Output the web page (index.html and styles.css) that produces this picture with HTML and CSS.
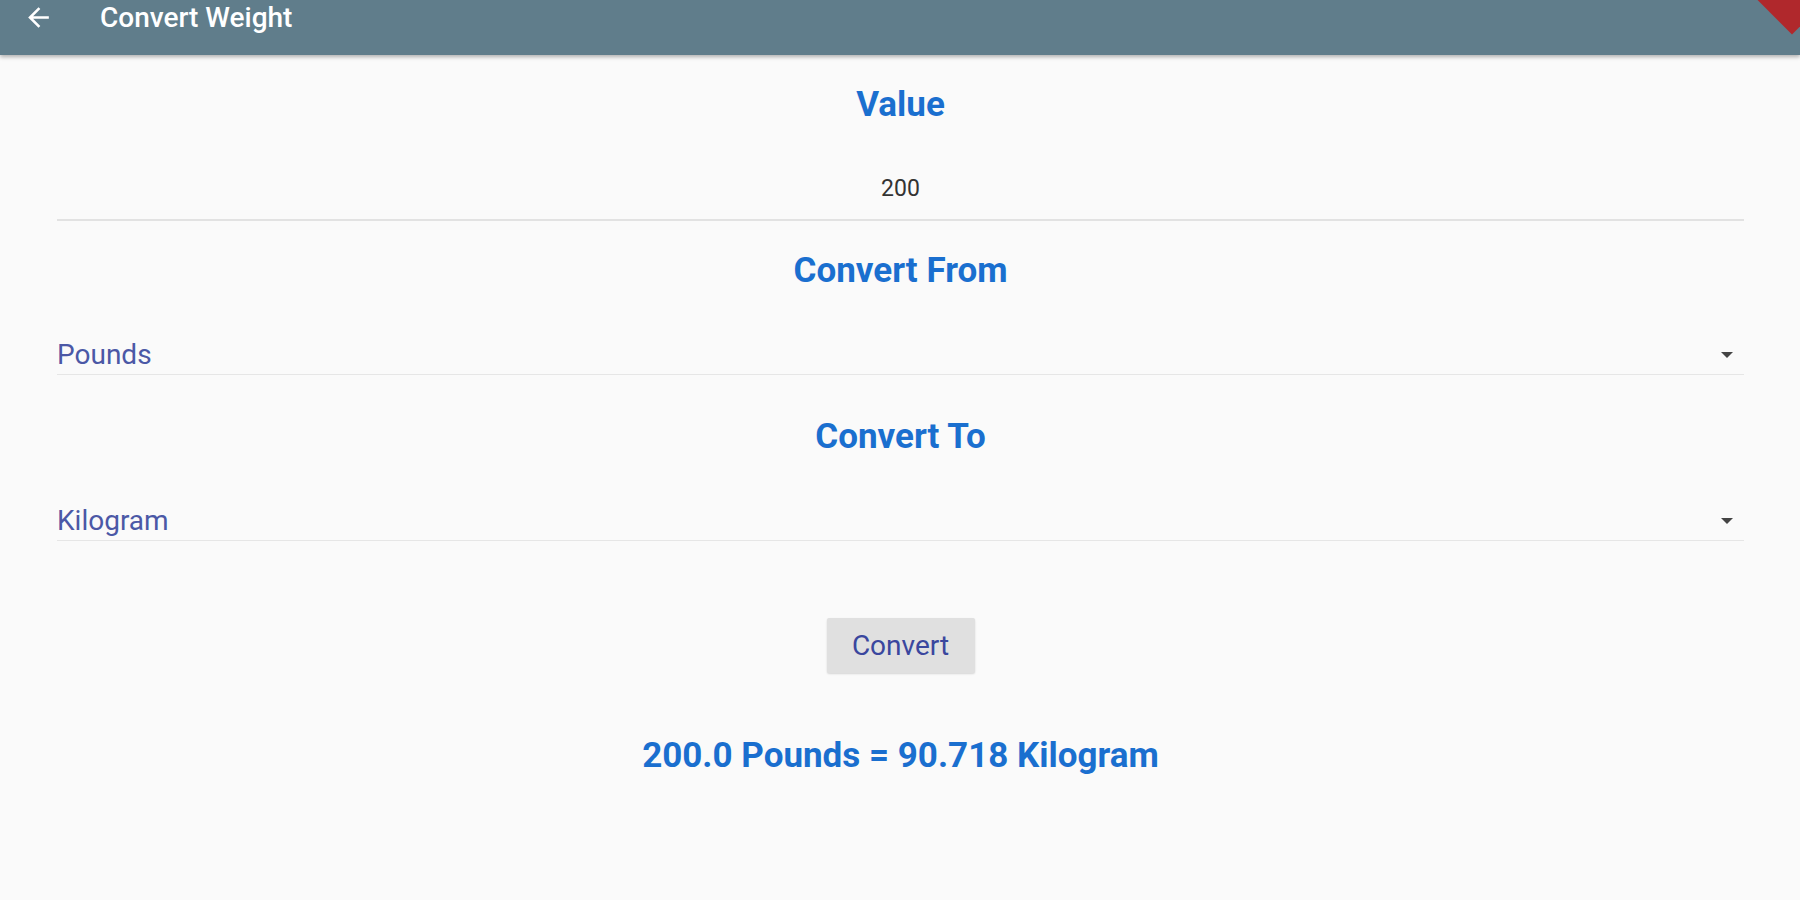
FILE: index.html
```html
<!DOCTYPE html>
<html lang="en">
<head>
  <meta charset="UTF-8">
  <meta name="viewport" content="width=device-width, initial-scale=1.0">
  <title>Convert Weight</title>
  <link rel="stylesheet" href="styles.css">
</head>
<body>
  <header class="app-bar">
    <span class="back">
      <svg viewBox="0 0 24 24"><path d="M20 11H7.83l5.59-5.59L12 4l-8 8 8 8 1.41-1.41L7.83 13H20v-2z" fill="#fff"/></svg>
    </span>
    <span class="title">Convert Weight</span>
    <span class="debug-banner"></span>
  </header>

  <main class="form">
    <h2 class="section-title first">Value</h2>
    <div class="value-field">200</div>

    <h2 class="section-title">Convert From</h2>
    <div class="dropdown">
      <span>Pounds</span>
      <span class="caret"></span>
    </div>

    <h2 class="section-title">Convert To</h2>
    <div class="dropdown">
      <span>Kilogram</span>
      <span class="caret"></span>
    </div>

    <div class="actions">
      <button class="convert-btn">Convert</button>
    </div>

    <p class="result">200.0 Pounds = 90.718 Kilogram</p>
  </main>
</body>
</html>
```

FILE: styles.css
```css
body {
  margin: 0;
  background-color: #fafafa;
  font-family: Roboto, "Liberation Sans", sans-serif;
  overflow: hidden;
}
.app-bar {
  position: relative;
  height: 55px;
  background-color: #607d8b;
  display: flex;
  align-items: flex-start;
  box-shadow: 0 2px 4px rgba(0, 0, 0, 0.3);
  overflow: hidden;
}
.back {
  margin: 2px 0 0 23px;
  width: 31px;
  height: 31px;
}
.back svg {
  width: 31px;
  height: 31px;
}
.title {
  margin: 0 0 0 46px;
  color: #fff;
  font-size: 28px;
  font-weight: 500;
  line-height: 36px;
}
.debug-banner {
  position: absolute;
  right: -22px;
  top: -38px;
  width: 60px;
  height: 60px;
  background-color: #b0282c;
  transform: rotate(45deg);
}
.form {
  padding: 0 56px 0 57px;
  display: flex;
  flex-direction: column;
}
.section-title {
  margin: 0;
  text-align: center;
  color: #1a6fcf;
  font-size: 35px;
  font-weight: 700;
  line-height: 40px;
}
.section-title.first {
  margin-top: 30px;
}
.value-field {
  text-align: center;
  color: #333;
  font-size: 23px;
  line-height: 30px;
  padding: 49px 0 15px;
  border-bottom: 2px solid #e2e2e2;
}
.value-field + .section-title {
  margin-top: 30px;
}
.dropdown {
  margin-top: 48px;
  margin-bottom: 42px;
  display: flex;
  justify-content: space-between;
  align-items: center;
  color: #4b58a6;
  font-size: 28px;
  line-height: 32px;
  padding-bottom: 3px;
  border-bottom: 1px solid #e6e6e6;
}
.caret {
  width: 0;
  height: 0;
  border-left: 6px solid transparent;
  border-right: 6px solid transparent;
  border-top: 6px solid #444;
  margin-right: 11px;
}
.actions {
  display: flex;
  justify-content: center;
  margin-top: 35px;
}
.convert-btn {
  width: 148px;
  height: 55px;
  font-family: inherit;
  font-size: 28px;
  color: #3a479e;
  background-color: #e0e0e0;
  border: none;
  border-radius: 2px;
  box-shadow: 0 1px 2px rgba(0, 0, 0, 0.15);
  cursor: pointer;
}
.result {
  margin: 63px 0 0;
  text-align: center;
  color: #1a6fcf;
  font-size: 35px;
  font-weight: 700;
  line-height: 40px;
}
```
